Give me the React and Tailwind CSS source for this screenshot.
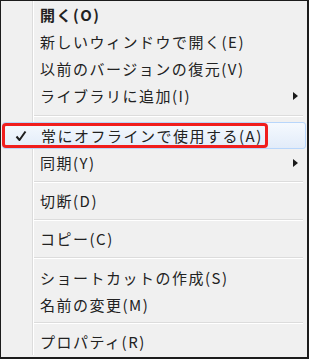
import React from 'react'

const items = [
  { label: '開く(O)', bold: true },
  { label: '新しいウィンドウで開く(E)' },
  { label: '以前のバージョンの復元(V)' },
  { label: 'ライブラリに追加(I)', sub: true },
  { sep: 'h-[13px]' },
  { label: '常にオフラインで使用する(A)', checked: true },
  { label: '同期(Y)', sub: true },
  { sep: 'h-[11px]' },
  { label: '切断(D)' },
  { sep: 'h-[11px]' },
  { label: 'コピー(C)' },
  { sep: 'h-[12px]' },
  { label: 'ショートカットの作成(S)' },
  { label: '名前の変更(M)' },
  { sep: 'h-[10px]' },
  { label: 'プロパティ(R)' },
]

const Arrow = () => (
  <svg width="5" height="8" viewBox="0 0 5 8" className="ml-auto mr-[9px]">
    <path d="M0 0 L5 4 L0 8 Z" fill="#1a1a1a" />
  </svg>
)

const Check = () => (
  <svg width="12" height="12" viewBox="0 0 12 12">
    <path d="M1.5 6.5 L4.5 10 L10.5 1.5" fill="none" stroke="#1f1f1f" strokeWidth="2" strokeLinejoin="round" />
  </svg>
)

const Separator = ({ height }) => (
  <div className={`flex ${height}`}>
    <div className="w-[32px] border-r border-[#dcdcdc]" />
    <div className="flex-1 flex flex-col justify-center border-l border-white mr-[4px]">
      <div className="h-px bg-[#dcdcdc]" />
      <div className="h-px bg-white" />
    </div>
  </div>
)

const Item = ({ item }) => {
  if (item.checked) {
    return (
      <div className="h-[27px] mx-[1px] rounded-[3px] border border-[#b8d6fb] bg-gradient-to-b from-[#f5f9fe] to-[#e2ecf9] flex">
        <div className="w-[266px] h-full -ml-px border-[3px] border-[#f01e1e] rounded-[4px] flex items-center">
          <div className="w-[29px] flex justify-center pl-[2px]">
            <Check />
          </div>
          <span className="pl-[7px] text-[15px] tracking-[1.5px] text-[#222]">{item.label}</span>
        </div>
      </div>
    )
  }
  return (
    <div className="flex h-[27px] items-center">
      <div className="w-[32px] h-full border-r border-[#dcdcdc]" />
      <div className="flex-1 h-full flex items-center border-l border-white">
        <span className={`pl-[6px] text-[15px] tracking-[1.5px] text-[#222] ${item.bold ? 'font-bold' : ''}`}>
          {item.label}
        </span>
        {item.sub && <Arrow />}
      </div>
    </div>
  )
}

const App = () => {
  return (
    <div className="w-[309px] h-[359px] bg-[#f0f0f0] border-l border-t border-r-2 border-b-2 border-[#1c1c1c] overflow-hidden font-['Noto_Sans_CJK_JP',sans-serif] leading-none">
      {items.map((item, i) =>
        item.sep ? <Separator key={i} height={item.sep} /> : <Item key={i} item={item} />
      )}
    </div>
  )
}

export default App
